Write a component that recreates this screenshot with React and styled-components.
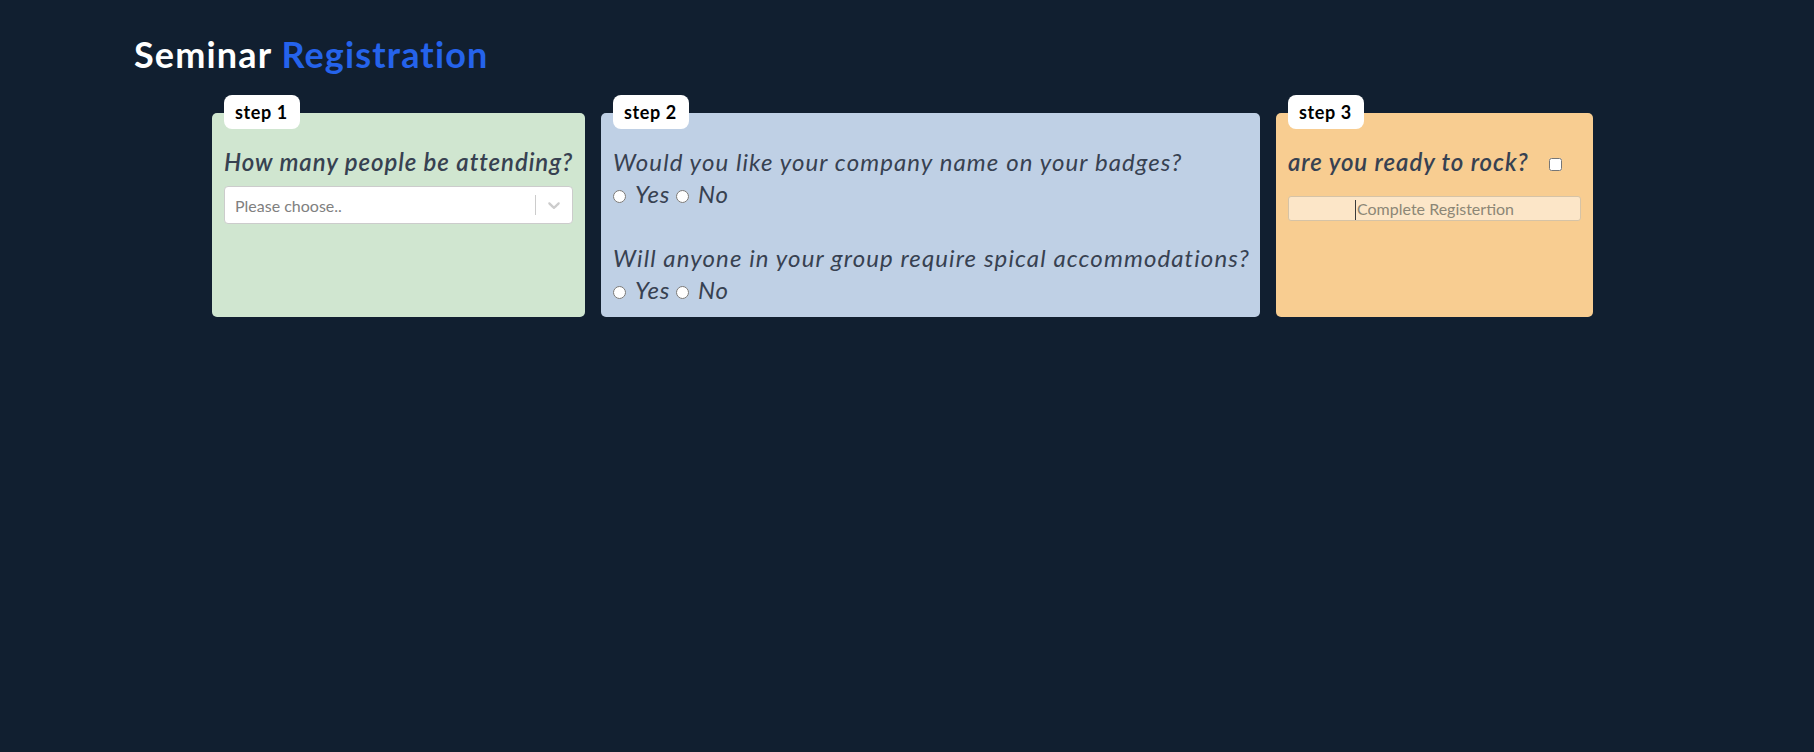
import React from "react";
import styled, { createGlobalStyle } from "styled-components";

const GlobalStyle = createGlobalStyle`
  body {
    margin: 0;
    background-color: #111f30;
    font-family: "Lato", "Open Sans", sans-serif;
  }
`;

const Page = styled.div`
  min-height: 100vh;
  padding: 34px 134px 0;
  box-sizing: border-box;
`;

const Title = styled.h1`
  margin: 0;
  font-size: 36px;
  line-height: 40px;
  font-weight: 700;
  letter-spacing: 1.15px;
  color: #ffffff;
`;

const Accent = styled.span`
  color: #2563eb;
`;

const Steps = styled.div`
  display: flex;
  align-items: stretch;
  gap: 16px;
  margin-top: 39px;
  padding-left: 78px;
`;

const Card = styled.div`
  position: relative;
  box-sizing: border-box;
  width: ${(props) => props.width}px;
  padding: 33px 12px 11px;
  border-radius: 5px;
  background-color: ${(props) => props.bg};
`;

const Badge = styled.div`
  position: absolute;
  top: -18px;
  left: 12px;
  height: 34px;
  padding: 0 12px 0 11px;
  border-radius: 8px;
  background: #ffffff;
  color: #000000;
  font-size: 18px;
  font-weight: 700;
  letter-spacing: 0.6px;
  line-height: 34px;
`;

const Question = styled.div`
  font-size: 24px;
  line-height: 32px;
  font-style: italic;
  font-weight: ${(props) => (props.bold ? 600 : 400)};
  letter-spacing: ${(props) => (props.bold ? 0.95 : 1.1)}px;
  color: #374151;
  white-space: nowrap;
`;

const Spacer = styled.div`
  height: 32px;
`;

const Select = styled.div`
  display: flex;
  align-items: center;
  box-sizing: border-box;
  height: 38px;
  margin-top: 8px;
  background: #ffffff;
  border: 1px solid #cccccc;
  border-radius: 4px;
`;

const Placeholder = styled.div`
  flex: 1;
  padding: 2px 8px 2px 10px;
  font-size: 16px;
  color: #808080;
`;

const Separator = styled.span`
  align-self: stretch;
  width: 1px;
  margin: 8px 0;
  background: #cccccc;
`;

const Indicator = styled.div`
  display: flex;
  padding: 8px;
  color: #cccccc;
`;

const RadioRow = styled.div`
  font-size: 24px;
  line-height: 32px;
  font-style: italic;
  letter-spacing: 0.8px;
  color: #374151;
`;

const Option = styled.label`
  & + & {
    margin-left: 6px;
  }
`;

const Radio = styled.input.attrs({ type: "radio" })`
  width: 13px;
  height: 13px;
  margin: 0 9px 0 0;
`;

const Check = styled.input.attrs({ type: "checkbox" })`
  width: 13px;
  height: 13px;
  margin: 0 0 0 20px;
`;

const SubmitButton = styled.button`
  display: block;
  width: 100%;
  height: 25px;
  margin-top: 18px;
  padding: 0;
  border: 1px solid #d6c3a6;
  border-radius: 3px;
  background: rgba(255, 255, 255, 0.5);
  font-family: "Lato", "Open Sans", sans-serif;
  font-size: 16px;
  line-height: 23px;
  color: #8c8676;

  &::before {
    content: "";
    display: inline-block;
    width: 1px;
    height: 20px;
    margin-right: 1px;
    vertical-align: -5px;
    background: #3a3a3a;
  }
`;

const Chevron = () => (
  <svg width="20" height="20" viewBox="0 0 20 20" fill="currentColor">
    <path d="M4.516 7.548c0.436-0.446 1.043-0.481 1.576 0l3.908 3.747 3.908-3.747c0.533-0.481 1.141-0.446 1.574 0 0.436 0.445 0.408 1.197 0 1.615-0.406 0.418-4.695 4.502-4.695 4.502-0.217 0.223-0.502 0.335-0.787 0.335s-0.57-0.112-0.789-0.335c0 0-4.287-4.084-4.695-4.502s-0.436-1.17 0-1.615z" />
  </svg>
);

const YesNo = ({ name }) => (
  <RadioRow>
    <Option>
      <Radio name={name} />
      Yes
    </Option>
    <Option>
      <Radio name={name} />
      No
    </Option>
  </RadioRow>
);

const App = () => {
  return (
    <Page>
      <GlobalStyle />
      <Title>
        Seminar <Accent>Registration</Accent>
      </Title>
      <Steps>
        <Card width={373} bg="#d0e6d0">
          <Badge>step 1</Badge>
          <Question bold>How many people be attending?</Question>
          <Select>
            <Placeholder>Please choose..</Placeholder>
            <Separator />
            <Indicator>
              <Chevron />
            </Indicator>
          </Select>
        </Card>
        <Card width={659} bg="#bfd0e5">
          <Badge>step 2</Badge>
          <Question>Would you like your company name on your badges?</Question>
          <YesNo name="badges" />
          <Spacer />
          <Question>Will anyone in your group require spical accommodations?</Question>
          <YesNo name="accommodations" />
        </Card>
        <Card width={317} bg="#f8cd91">
          <Badge>step 3</Badge>
          <Question bold>
            are you ready to rock?
            <Check />
          </Question>
          <SubmitButton disabled>Complete Registertion</SubmitButton>
        </Card>
      </Steps>
    </Page>
  );
};

export default App;
